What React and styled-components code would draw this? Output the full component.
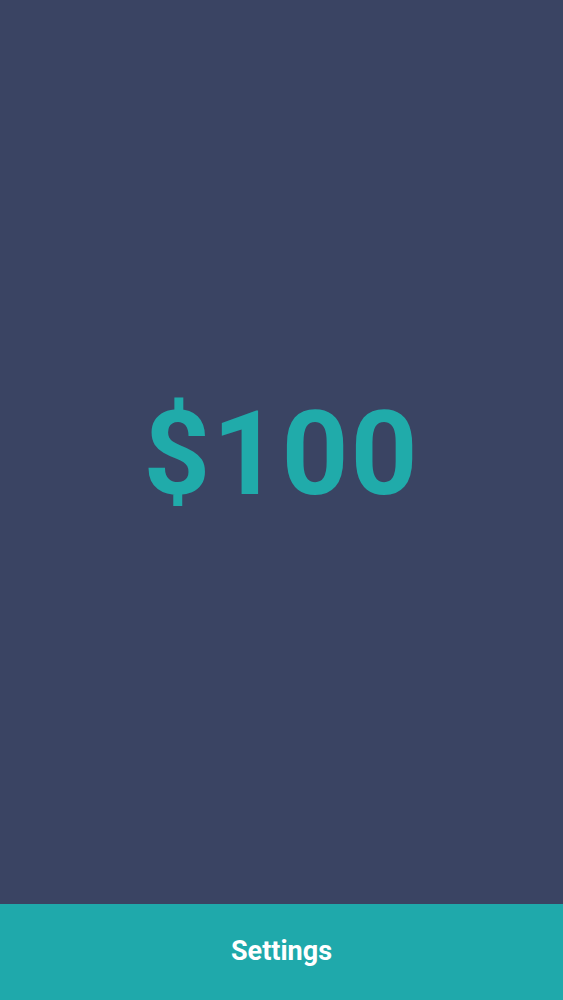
import styled, { createGlobalStyle } from "styled-components";

const GlobalStyle = createGlobalStyle`
  html, body {
    margin: 0;
    padding: 0;
    height: 100%;
  }
  #root {
    height: 100%;
  }
`;

const Screen = styled.div`
  display: flex;
  flex-direction: column;
  height: 100vh;
  background: #3a4463;
  font-family: Roboto, "Open Sans", sans-serif;
`;

const Main = styled.main`
  flex: 1;
  display: flex;
  align-items: center;
  justify-content: center;
  padding-top: 4px;
`;

const Amount = styled.h1`
  margin: 0;
  font-size: 117px;
  font-weight: 700;
  letter-spacing: 2px;
  color: #20abaa;
  line-height: 1;
`;

const SettingsBar = styled.button`
  height: 96px;
  border: none;
  background: #1fa9ab;
  color: #ffffff;
  font-family: inherit;
  font-size: 27px;
  font-weight: 700;
  cursor: pointer;
  padding: 0 0 2px;
`;

const App = () => {
  return (
    <>
      <GlobalStyle />
      <Screen>
        <Main>
          <Amount>$100</Amount>
        </Main>
        <SettingsBar>Settings</SettingsBar>
      </Screen>
    </>
  );
};

export default App;
